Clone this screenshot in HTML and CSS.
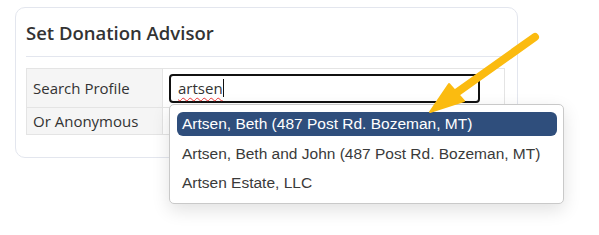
FILE: index.html
```html
<!DOCTYPE html>
<html lang="en">
<head>
    <meta charset="UTF-8">
    <title>Set Donation Advisor</title>
    <link rel="stylesheet" href="styles.css">
</head>
<body>
    <div class="card">
        <h2 class="card-title">Set Donation Advisor</h2>
        <div class="divider"></div>
        <table class="advisor-table">
            <tr class="row-search">
                <th>Search Profile</th>
                <td>
                    <div class="search-input"><span class="typed">artsen</span><span class="caret"></span></div>
                </td>
            </tr>
            <tr class="row-anon">
                <th>Or Anonymous</th>
                <td></td>
            </tr>
        </table>
    </div>

    <ul class="suggestions">
        <li class="active">Artsen, Beth (487 Post Rd. Bozeman, MT)</li>
        <li>Artsen, Beth and John (487 Post Rd. Bozeman, MT)</li>
        <li>Artsen Estate, LLC</li>
    </ul>

    <svg class="pointer" width="599" height="235" viewBox="0 0 599 235">
        <line x1="535" y1="37" x2="452" y2="96" stroke="#fbbb10" stroke-width="8" stroke-linecap="round"/>
        <polygon points="430,112 449,84 464,101" fill="#fbbb10" stroke="#fbbb10" stroke-width="2" stroke-linejoin="round"/>
    </svg>
</body>
</html>
```

FILE: styles.css
```css
body {
    margin: 0;
    padding: 7px 0 0 15px;
    background: #fff;
    font-family: "Open Sans", sans-serif;
    color: #333;
}

.card {
    width: 479px;
    padding: 0 12px 22px 10px;
    border: 1px solid #e3e6ee;
    border-radius: 10px;
    background: #fff;
}

.card-title {
    margin: 0;
    padding: 13px 0 12px 0;
    font-size: 18.5px;
    font-weight: 600;
    line-height: 23px;
    color: #333;
}

.divider {
    height: 1px;
    background-color: #e3e6ee;
    margin-bottom: 11px;
}

.advisor-table {
    width: 100%;
    border-collapse: collapse;
}

.advisor-table th {
    width: 129px;
    padding: 0 0 0 6px;
    text-align: left;
    font-weight: normal;
    font-size: 15px;
    background-color: #f5f5f5;
    border: 1px solid #e4e4e4;
}

.advisor-table td {
    padding: 0 6px;
    border: 1px solid #e4e4e4;
}

.row-search th, .row-search td {
    height: 38px;
}

.row-anon th, .row-anon td {
    height: 26px;
}

.search-input {
    width: 293px;
    height: 25px;
    padding: 0 7px;
    border: 2px solid #111;
    border-radius: 4px;
    display: flex;
    align-items: center;
    font-size: 15px;
}

.typed {
    text-decoration: underline wavy #e33;
    text-decoration-thickness: 1px;
    text-underline-offset: 3px;
}

.caret {
    display: inline-block;
    width: 1px;
    height: 18px;
    background: #111;
}

.suggestions {
    position: absolute;
    left: 169px;
    top: 104px;
    width: 380px;
    margin: 0;
    padding: 7px 6px 6px 7px;
    list-style: none;
    background: #fff;
    border: 1px solid #c9c9c9;
    border-radius: 5px;
    box-shadow: 0 6px 18px rgba(0, 0, 0, 0.12);
    font-family: "Liberation Sans", Arial, sans-serif;
    font-size: 15.5px;
    color: #3a3a3a;
}

.suggestions li {
    height: 29px;
    line-height: 29px;
    padding-left: 5px;
}

.suggestions li.active {
    height: 24px;
    line-height: 24px;
    margin-bottom: 3px;
    background: #2f4e7c;
    color: #fff;
    border-radius: 6px;
}

.pointer {
    position: absolute;
    left: 0;
    top: 0;
}
```
